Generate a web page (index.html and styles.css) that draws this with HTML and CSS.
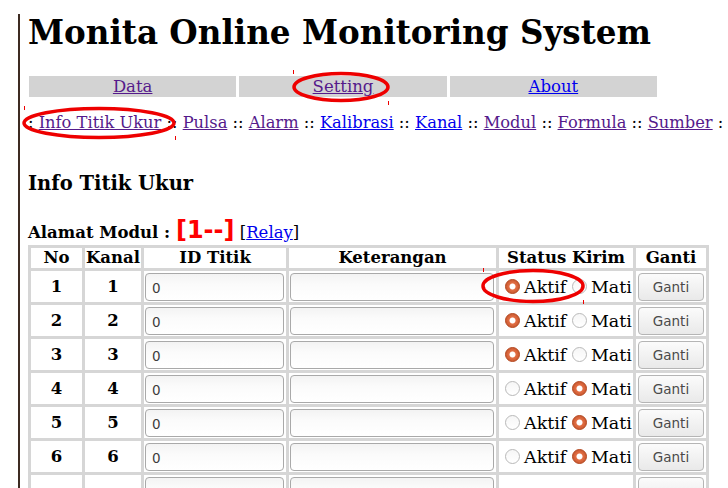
FILE: index.html
```html
<!DOCTYPE html>
<html>
<head>
<meta charset="utf-8">
<link rel="stylesheet" href="styles.css">
</head>
<body>
<div class="page">
  <h1 class="title">Monita Online Monitoring System</h1>
  <nav class="menu">
    <div class="menu-cell"><a class="visited" href="#">Data</a></div>
    <div class="menu-cell"><a class="visited" href="#">Setting</a></div>
    <div class="menu-cell"><a href="#">About</a></div>
  </nav>
  <div class="submenu">: <a class="visited" href="#">Info Titik Ukur</a> :: <a class="visited" href="#">Pulsa</a> :: <a class="visited" href="#">Alarm</a> :: <a href="#">Kalibrasi</a> :: <a href="#">Kanal</a> :: <a class="visited" href="#">Modul</a> :: <a class="visited" href="#">Formula</a> :: <a class="visited" href="#">Sumber</a> :</div>
  <h3 class="section">Info Titik Ukur</h3>
  <div class="alamat"><b>Alamat Modul : </b><span class="addr">[1--]</span> [<a href="#">Relay</a>]</div>
  <table class="grid">
    <colgroup>
      <col class="c-no"><col class="c-kanal"><col class="c-id"><col class="c-ket"><col class="c-status"><col class="c-ganti">
    </colgroup>
    <tr><th>No</th><th>Kanal</th><th>ID Titik</th><th>Keterangan</th><th>Status Kirim</th><th>Ganti</th></tr>
    <tr><td class="num">1</td><td class="num">1</td><td><input class="field f-id" value="0"></td><td><input class="field f-ket" value=""></td><td class="status"><input type="radio" name="s1" checked>Aktif <input type="radio" name="s1">Mati</td><td><button class="btn">Ganti</button></td></tr>
    <tr><td class="num">2</td><td class="num">2</td><td><input class="field f-id" value="0"></td><td><input class="field f-ket" value=""></td><td class="status"><input type="radio" name="s2" checked>Aktif <input type="radio" name="s2">Mati</td><td><button class="btn">Ganti</button></td></tr>
    <tr><td class="num">3</td><td class="num">3</td><td><input class="field f-id" value="0"></td><td><input class="field f-ket" value=""></td><td class="status"><input type="radio" name="s3" checked>Aktif <input type="radio" name="s3">Mati</td><td><button class="btn">Ganti</button></td></tr>
    <tr><td class="num">4</td><td class="num">4</td><td><input class="field f-id" value="0"></td><td><input class="field f-ket" value=""></td><td class="status"><input type="radio" name="s4">Aktif <input type="radio" name="s4" checked>Mati</td><td><button class="btn">Ganti</button></td></tr>
    <tr><td class="num">5</td><td class="num">5</td><td><input class="field f-id" value="0"></td><td><input class="field f-ket" value=""></td><td class="status"><input type="radio" name="s5">Aktif <input type="radio" name="s5" checked>Mati</td><td><button class="btn">Ganti</button></td></tr>
    <tr><td class="num">6</td><td class="num">6</td><td><input class="field f-id" value="0"></td><td><input class="field f-ket" value=""></td><td class="status"><input type="radio" name="s6">Aktif <input type="radio" name="s6" checked>Mati</td><td><button class="btn">Ganti</button></td></tr>
    <tr><td></td><td></td><td><input class="field f-id" value=""></td><td><input class="field f-ket" value=""></td><td></td><td><button class="btn" aria-label="Ganti"></button></td></tr>
  </table>
</div>
<svg class="marks" width="728" height="488" viewBox="0 0 728 488">
  <g fill="none" stroke="#ee0000" stroke-width="3.5">
    <ellipse cx="341" cy="87" rx="47" ry="13.5"/>
    <ellipse cx="99" cy="123" rx="75" ry="14.5"/>
    <ellipse cx="533" cy="286" rx="50" ry="15.5"/>
  </g>
  <g stroke="#ee0000" stroke-width="1">
    <line x1="293.5" y1="70" x2="293.5" y2="74"/>
    <line x1="388.5" y1="101" x2="388.5" y2="105"/>
    <line x1="24.5" y1="106" x2="24.5" y2="110"/>
    <line x1="175.5" y1="136" x2="175.5" y2="140"/>
    <line x1="483.5" y1="268" x2="483.5" y2="272"/>
    <line x1="583.5" y1="300" x2="583.5" y2="304"/>
  </g>
</svg>
</body>
</html>
```
FILE: styles.css
```css
html, body {
  margin: 0;
  padding: 0;
  background: #ffffff;
}
body {
  font-family: "DejaVu Serif", serif;
  font-size: 16.5px;
  color: #000;
  height: 488px;
  overflow: hidden;
  position: relative;
}
.page {
  margin: 7px 0 0 18px;
  border-left: 2px solid #3d2b22;
  padding-left: 8px;
  min-height: 481px;
}
a {
  color: #0000ee;
  text-decoration: underline;
}
a.visited {
  color: #551a8b;
}
.title {
  font-size: 32.6px;
  font-weight: bold;
  margin: 14px 0 0 0;
  line-height: 37px;
}
.menu {
  display: flex;
  gap: 3px;
  width: 628px;
  margin: 25px 0 0 1px;
}
.menu-cell {
  flex: 1;
  background: #d3d3d3;
  height: 21px;
  line-height: 21px;
  text-align: center;
}
.submenu {
  margin-top: 16px;
  font-size: 16.3px;
  line-height: 19px;
  white-space: nowrap;
}
.section {
  font-size: 19.5px;
  font-weight: bold;
  margin: 41px 0 0 0;
  line-height: 22px;
}
.alamat {
  margin-top: 23px;
  line-height: 24px;
  white-space: nowrap;
}
.addr {
  font-family: "DejaVu Sans", sans-serif;
  font-weight: bold;
  font-size: 24px;
  color: #ff0000;
}
.grid {
  border-collapse: collapse;
  width: 678px;
  margin-left: 0;
  table-layout: fixed;
}
.c-no { width: 54px; }
.c-kanal { width: 59px; }
.c-id { width: 145px; }
.c-ket { width: 210px; }
.c-status { width: 137px; }
.c-ganti { width: 73px; }
.grid th, .grid td {
  border: 3px solid #d6d6d6;
  padding: 0 1px;
}
.grid th {
  height: 20px;
  font-weight: bold;
  text-align: center;
  line-height: 20px;
}
.grid td {
  height: 31px;
}
.grid td.num {
  font-weight: bold;
  text-align: center;
}
.field {
  box-sizing: border-box;
  height: 28px;
  border: 1px solid #a9a9a9;
  border-radius: 4px;
  background: linear-gradient(#f3f3f3, #fbfbfb 40%, #ffffff);
  font-family: "DejaVu Sans", sans-serif;
  font-size: 13.5px;
  color: #3c3c3c;
  padding: 3px 6px 0 6px;
  margin: 0;
  display: block;
}
.f-id { width: 139px; }
.f-ket { width: 204px; }
.status {
  white-space: nowrap;
  font-size: 17.5px;
  padding: 0 0 0 6px !important;
}
.status input[type="radio"] {
  appearance: none;
  -webkit-appearance: none;
  width: 15px;
  height: 15px;
  margin: 0 4px 0 0;
  border-radius: 50%;
  border: 1px solid #b9b9b9;
  background: linear-gradient(#f6f6f6, #ffffff);
  vertical-align: -1px;
  box-sizing: border-box;
}
.status input[type="radio"]:checked {
  border: 1px solid #b44a23;
  background: radial-gradient(circle, #ffffff 0 2.6px, #e36f45 3.4px, #c9582f 7px);
}
.btn {
  box-sizing: border-box;
  width: 66px;
  height: 28px;
  border: 1px solid #b5b5b5;
  border-radius: 4px;
  background: linear-gradient(#fbfbfb, #e9e9e9);
  font-family: "DejaVu Sans", sans-serif;
  font-size: 13.5px;
  color: #4a4a4a;
  padding: 0;
  margin: 0 0 0 1px;
  display: block;
}
.marks {
  position: absolute;
  left: 0;
  top: 0;
  pointer-events: none;
}
```
